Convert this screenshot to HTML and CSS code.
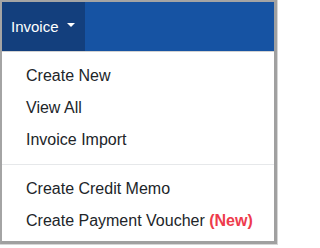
FILE: index.html
```html
<!DOCTYPE html>
<html>
<head>
<meta charset="utf-8">
<link rel="stylesheet" href="styles.css">
</head>
<body>
<div class="outer">
<div class="frame">
  <div class="navbar">
    <div class="nav-tab">Invoice<span class="caret"></span></div>
  </div>
  <div class="menu">
    <div class="item">Create New</div>
    <div class="item">View All</div>
    <div class="item">Invoice Import</div>
    <div class="divider"></div>
    <div class="item">Create Credit Memo</div>
    <div class="item">Create Payment Voucher <span class="new">(New)</span></div>
  </div>
</div>
</div>
</body>
</html>
```
FILE: styles.css
```css
html, body {
  margin: 0;
  padding: 0;
  background: #ffffff;
}
body {
  font-family: "Liberation Sans", Arial, sans-serif;
  font-size: 16px;
  color: #212529;
}
.outer {
  width: 277px;
  border-right: 1px solid #d6d6d6;
  border-bottom: 1px solid #d6d6d6;
}
.frame {
  width: 272px;
  height: 239px;
  border-top: 2px solid #a4a4a4;
  border-left: 2px solid #a4a4a4;
  border-right: 3px solid #a0a0a0;
  border-bottom: 3px solid #a0a0a0;
  display: flex;
  flex-direction: column;
  background: #ffffff;
}
.navbar {
  height: 49px;
  background: #1653a3;
  border-bottom: 1px solid #d2d2d2;
  display: flex;
}
.nav-tab {
  background: #133f7d;
  color: #ffffff;
  font-size: 15px;
  display: flex;
  align-items: center;
  padding: 0 10px 1px 9px;
  width: 64px;
}
.caret {
  display: inline-block;
  margin-left: 8px;
  width: 0;
  height: 0;
  border-left: 4.5px solid transparent;
  border-right: 4.5px solid transparent;
  border-top: 4.5px solid #ffffff;
  margin-top: -2px;
}
.menu {
  padding-top: 8px;
  display: flex;
  flex-direction: column;
}
.item {
  height: 32px;
  line-height: 32px;
  padding-left: 24px;
  white-space: nowrap;
}
.divider {
  height: 1px;
  background: #e6e8ea;
  margin: 8px 0;
}
.new {
  color: #ee3b4c;
  font-weight: bold;
}
```
